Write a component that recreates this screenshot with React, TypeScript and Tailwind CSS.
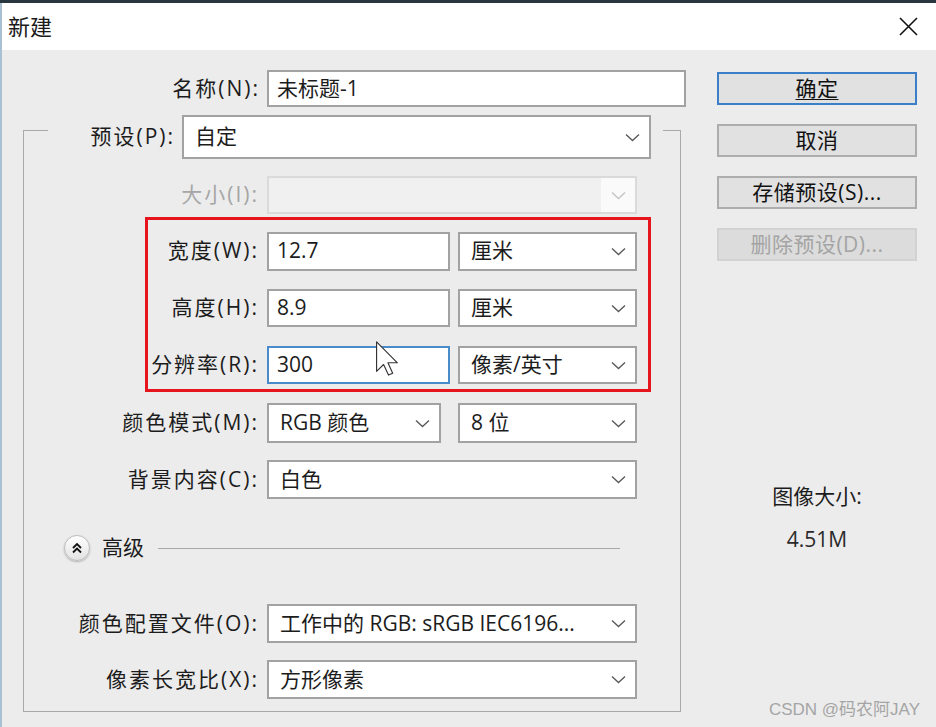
import React from "react";

const font = "font-['Open_Sans','Noto_Sans_CJK_SC',sans-serif]";

function Chevron({ muted = false }: { muted?: boolean }) {
  return (
    <svg width="15" height="9" viewBox="0 0 15 9" className="shrink-0">
      <polyline
        points="1,1.5 7.5,7.5 14,1.5"
        fill="none"
        stroke={muted ? "#c4c4c4" : "#5a5a5a"}
        strokeWidth="1.4"
      />
    </svg>
  );
}

function Select({ text, className }: { text: string; className: string }) {
  return (
    <div
      className={`flex items-center justify-between bg-white border-2 border-[#a2a2a2] pl-[11px] pr-[9px] text-[21px] text-[#1c1c1c] ${className}`}
    >
      <span className="whitespace-nowrap overflow-hidden">{text}</span>
      <Chevron />
    </div>
  );
}

function Input({ text, className, focused = false }: { text: string; className: string; focused?: boolean }) {
  return (
    <div
      className={`flex items-center bg-white border-2 pl-[8px] text-[21px] text-[#1c1c1c] ${
        focused ? "border-[#4a8bc9]" : "border-[#a2a2a2]"
      } ${className}`}
    >
      {text}
    </div>
  );
}

function Label({ text, className, muted = false }: { text: string; className: string; muted?: boolean }) {
  return (
    <div
      className={`shrink-0 text-right text-[21px] tracking-[2px] whitespace-nowrap ${
        muted ? "text-[#a6a6a6]" : "text-[#1c1c1c]"
      } ${className}`}
    >
      {text}
    </div>
  );
}

function Button({ text, primary = false, disabled = false }: { text: string; primary?: boolean; disabled?: boolean }) {
  return (
    <div
      className={`h-[33px] w-[200px] flex items-center justify-center border-2 text-[21px] tracking-[0.5px] ${
        primary
          ? "border-[#3a7fc8] bg-[#e1e1e1] text-[#111]"
          : disabled
          ? "border-[#d2d2d2] bg-[#dcdcdc] text-[#a4a4a4]"
          : "border-[#adadad] bg-[#e1e1e1] text-[#111]"
      }`}
    >
      <span className={primary ? "underline underline-offset-[3px] decoration-1" : ""}>{text}</span>
    </div>
  );
}

export default function App() {
  return (
    <div className={`relative w-[936px] h-[727px] overflow-hidden bg-[#ececec] ${font}`}>
      {/* window frame top */}
      <div className="h-[3px] bg-[#28363f]" />
      <div className="border-l-2 border-[#a9c0d3] h-[724px]">
        {/* Title bar */}
        <div className="h-[47px] bg-white flex items-center justify-between pl-[6px] pr-[18px]">
          <span className="text-[22px] text-[#1a1a1a]">新建</span>
          <svg width="19" height="19" viewBox="0 0 19 19">
            <path d="M1 1 L18 18 M18 1 L1 18" stroke="#111" strokeWidth="1.6" />
          </svg>
        </div>

        {/* Body */}
        <div className="flex">
          {/* Left column */}
          <div className="w-[698px]">
            {/* Name */}
            <div className="mt-[20px] flex items-center gap-[7px] h-[37px]">
              <Label text="名称(N):" className="w-[258px]" />
              <Input text="未标题-1" className="w-[419px] h-[37px]" />
            </div>

            {/* Group box */}
            <div className="mt-[23px] ml-[21px] w-[658px] border border-[#a9a9a9] pb-[12px]">
              {/* Preset row sits on top border */}
              <div className="-mt-[16px] ml-[24px] mr-[17px] h-[44px] bg-[#ececec] flex items-center gap-[7px]">
                <Label text="预设(P):" className="w-[127px]" />
                <Select text="自定" className="w-[469px] h-[44px]" />
              </div>

              {/* Size (disabled) */}
              <div className="mt-[17px] h-[38px] flex items-center gap-[8px]">
                <Label text="大小(I):" className="w-[235px]" muted />
                <div className="w-[370px] h-[38px] flex border-2 border-[#dadada] bg-[#f0f0f0]">
                  <div className="flex-1" />
                  <div className="w-[34px] bg-[#fafafa] flex items-center justify-center">
                    <Chevron muted />
                  </div>
                </div>
              </div>

              {/* Highlighted dimensions */}
              <div className="mt-[3px] ml-[121px] w-[506px] border-[3px] border-[#e5141d] pt-[12px] pb-[5px] flex flex-col gap-[19px]">
                <div className="h-[38px] flex items-center gap-[8px]">
                  <Label text="宽度(W):" className="w-[111px]" />
                  <Input text="12.7" className="w-[183px] h-[39px]" />
                  <Select text="厘米" className="w-[179px] h-[39px]" />
                </div>
                <div className="h-[38px] flex items-center gap-[8px]">
                  <Label text="高度(H):" className="w-[111px]" />
                  <Input text="8.9" className="w-[183px] h-[38px]" />
                  <Select text="厘米" className="w-[179px] h-[38px]" />
                </div>
                <div className="h-[38px] flex items-center gap-[8px]">
                  <Label text="分辨率(R):" className="w-[111px]" />
                  <Input text="300" className="w-[183px] h-[38px]" focused />
                  <Select text="像素/英寸" className="w-[179px] h-[38px]" />
                </div>
              </div>

              {/* Color mode */}
              <div className="mt-[11px] h-[40px] flex items-center gap-[8px]">
                <Label text="颜色模式(M):" className="w-[235px]" />
                <Select text="RGB 颜色" className="w-[174px] h-[40px]" />
                <Select text="8 位" className="ml-[9px] w-[179px] h-[40px]" />
              </div>

              {/* Background */}
              <div className="mt-[17px] h-[39px] flex items-center gap-[8px]">
                <Label text="背景内容(C):" className="w-[235px]" />
                <Select text="白色" className="w-[370px] h-[39px]" />
              </div>

              {/* Advanced */}
              <div className="mt-[36px] ml-[40px] h-[26px] flex items-center">
                <div className="w-[26px] h-[26px] rounded-full border border-[#bdbdbd] bg-gradient-to-b from-white to-[#e2e2e2] shadow-[0_1px_2px_rgba(0,0,0,0.25)] flex items-center justify-center">
                  <svg width="12" height="12" viewBox="0 0 12 12">
                    <path d="M2 6 L6 2 L10 6 M2 10.5 L6 6.5 L10 10.5" fill="none" stroke="#111" strokeWidth="1.8" />
                  </svg>
                </div>
                <span className="ml-[12px] text-[21px] text-[#1c1c1c]">高级</span>
                <div className="ml-[14px] w-[462px] h-px bg-[#a8a8a8]" />
              </div>

              {/* Color profile */}
              <div className="mt-[43px] h-[39px] flex items-center gap-[8px]">
                <Label text="颜色配置文件(O):" className="w-[235px]" />
                <Select text="工作中的 RGB: sRGB IEC6196..." className="w-[370px] h-[39px]" />
              </div>

              {/* Pixel aspect */}
              <div className="mt-[17px] h-[39px] flex items-center gap-[8px]">
                <Label text="像素长宽比(X):" className="w-[235px]" />
                <Select text="方形像素" className="w-[370px] h-[39px]" />
              </div>
            </div>
          </div>

          {/* Right column */}
          <div className="ml-[17px] w-[200px] pt-[22px] flex flex-col items-center">
            <div className="flex flex-col gap-[19px]">
              <Button text="确定" primary />
              <Button text="取消" />
              <Button text="存储预设(S)..." />
              <Button text="删除预设(D)..." disabled />
            </div>
            <div className="mt-[221px] leading-[28px] text-[21px] text-[#1c1c1c]">图像大小:</div>
            <div className="mt-[15px] leading-[28px] text-[21px] text-[#2a2a2a]">4.51M</div>
          </div>
        </div>
      </div>

      {/* Mouse cursor */}
      <svg
        width="24"
        height="36"
        viewBox="0 0 12 19"
        className="absolute left-[375px] top-[341px]"
      >
        <path d="M0.5 0.5 L0.5 16 L4.2 12.4 L6.8 18 L9 17 L6.5 11.5 L11.5 11.5 Z" fill="#fff" stroke="#333" strokeWidth="0.6" strokeLinejoin="round" />
      </svg>

      {/* Watermark */}
      <div className="absolute right-[16px] top-[697px] text-[17px] text-[#a5a5a5] font-['Liberation_Sans','Noto_Sans_CJK_SC',sans-serif]">
        CSDN @码农阿JAY
      </div>
    </div>
  );
}
